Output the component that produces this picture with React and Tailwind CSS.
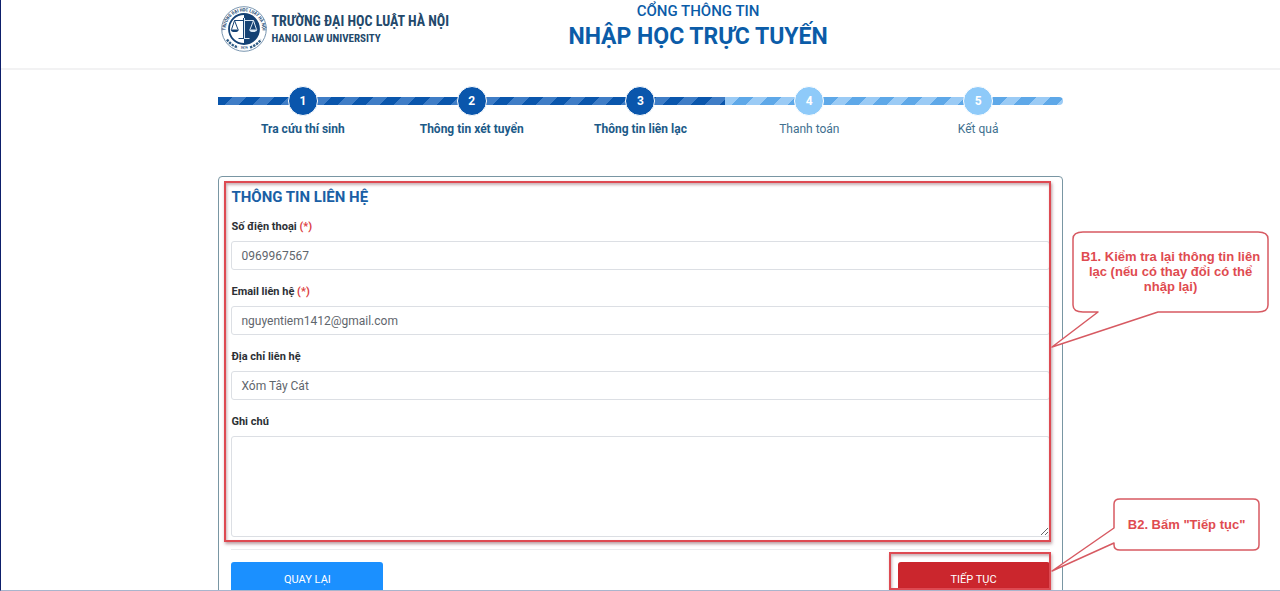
import React, { useState } from 'react';
import clsx from 'clsx';

// --- Static config ---
const STEPS = [
  { id: 1, label: 'Tra cứu thí sinh' },
  { id: 2, label: 'Thông tin xét tuyển' },
  { id: 3, label: 'Thông tin liên lạc' },
  { id: 4, label: 'Thanh toán' },
  { id: 5, label: 'Kết quả' },
];

const CURRENT_STEP = 3;

const FIELDS = [
  { name: 'phone', label: 'Số điện thoại', type: 'tel', required: true },
  { name: 'email', label: 'Email liên hệ', type: 'email', required: true },
  { name: 'address', label: 'Địa chỉ liên hệ', type: 'text', required: false },
];

// --- University seal ---
const Seal = () => (
  <svg viewBox="0 0 46 46" className="size-[46px] shrink-0" aria-hidden="true">
    <defs>
      <path id="seal-top" d="M4.9 27 A18.4 18.4 0 1 1 41.1 27" />
      <path id="seal-bottom" d="M7 35.5 A20.6 20.6 0 0 0 39 35.5" />
    </defs>
    <circle cx="23" cy="23" r="22.3" fill="#fff" stroke="#6a89a6" strokeWidth="0.9" />
    <text fontSize="4.6" fontWeight="700" fill="#1d4a73">
      <textPath href="#seal-top" startOffset="50%" textAnchor="middle">TRƯỜNG ĐẠI HỌC LUẬT HÀ NỘI</textPath>
    </text>
    <path d="M6 33.5 A20 20 0 0 0 17 41.4" fill="none" stroke="#2f5c85" strokeWidth="2.4" strokeDasharray="2.4 1" />
    <path d="M29 41.4 A20 20 0 0 0 40 33.5" fill="none" stroke="#2f5c85" strokeWidth="2.4" strokeDasharray="2.4 1" />
    <text fontSize="3.8" fontWeight="700" fill="#1d4a73">
      <textPath href="#seal-bottom" startOffset="50%" textAnchor="middle">1979</textPath>
    </text>
    <circle cx="23" cy="23" r="15" fill="#fff" stroke="#154274" strokeWidth="1.8" />
    <path d="M23 8 A15 15 0 0 1 23 38 Z" fill="#154274" />
    {/* scales: dark on the white half, light on the dark half */}
    <g fill="none" strokeWidth="1">
      <path d="M23 14.5 H13.5 M13.5 14.5 L10.5 23.5 M13.5 14.5 L17 23.5 M22.5 12 V32 M17.5 32.5 H23" stroke="#154274" />
      <path d="M23 14.5 H32.5 M32.5 14.5 L29 23.5 M32.5 14.5 L35.5 23.5 M23.5 12 V32 M23 32.5 H28.5" stroke="#dbe7f2" />
    </g>
    <path d="M9.5 23.5 H18 A4.3 3 0 0 1 9.5 23.5 Z" fill="#154274" />
    <path d="M28 23.5 H36.5 A4.3 3 0 0 1 28 23.5 Z" fill="#dbe7f2" />
  </svg>
);

const Header = () => (
  <header className="h-[70px] border-b-2 border-[#f2f2f3]">
    <div className="mx-auto flex w-[66%] items-start">
      <a href="#" className="flex w-[350px] shrink-0 items-center gap-1 pt-1.5 pl-[3px] font-['Roboto_Condensed','Liberation_Sans_Narrow','Roboto',sans-serif] font-bold text-[#23496b]">
        <Seal />
        <span className="flex flex-col whitespace-nowrap">
          <span className="text-[14px] leading-5">TRƯỜNG ĐẠI HỌC LUẬT HÀ NỘI</span>
          <span className="text-[11px] leading-4">HANOI LAW UNIVERSITY</span>
        </span>
      </a>
      <div className="pt-px text-center whitespace-nowrap text-[#0b5ca8]">
        <p className="text-[15px] leading-5 font-medium">CỔNG THÔNG TIN</p>
        <h1 className="text-[23px] leading-8 font-bold">NHẬP HỌC TRỰC TUYẾN</h1>
      </div>
    </div>
  </header>
);

// --- Progress bar with numbered steps ---
const Stepper = () => (
  <nav aria-label="Tiến trình" className="relative pt-4">
    <div className="absolute inset-x-0 top-[27px] flex h-2 overflow-hidden rounded-r-full">
      <div className="w-3/5 bg-[repeating-linear-gradient(135deg,#0a56ac_0_10px,#3f7dc6_10px_20px)]" />
      <div className="w-2/5 bg-[repeating-linear-gradient(135deg,#9bcbf5_0_10px,#5ea8e8_10px_20px)]" />
    </div>
    <ol className="relative grid grid-cols-5">
      {STEPS.map((step) => {
        const done = step.id <= CURRENT_STEP;
        return (
          <li key={step.id} className="flex flex-col items-center gap-[5px]">
            <span
              className={clsx(
                'flex size-[30px] items-center justify-center rounded-full border border-white text-[12px] font-bold text-white',
                done ? 'bg-[#0a56ac]' : 'bg-[#8ecaf9]'
              )}
            >
              {step.id}
            </span>
            <span className={clsx('text-[12px] leading-4', done ? 'font-bold text-[#1c5a88]' : 'text-[#41708f]')}>
              {step.label}
            </span>
          </li>
        );
      })}
    </ol>
  </nav>
);

const inputClass =
  'block w-full rounded-[3px] border border-[#dcdfe4] bg-white px-[9px] text-[12px] text-[#5f666d] outline-none focus:border-[#1b90ff]';

const ContactForm = () => {
  const [values, setValues] = useState({
    phone: '0969967567',
    email: 'nguyentiem1412@gmail.com',
    address: 'Xóm Tây Cát',
    note: '',
  });

  const handleChange = (e) => setValues({ ...values, [e.target.name]: e.target.value });

  return (
    <form
      onSubmit={(e) => e.preventDefault()}
      className="rounded-[4px] border border-[#7996a3] px-3 pt-2.5 pb-4"
    >
      <h2 className="mb-3 text-[15px] leading-5 font-bold text-[#1a5fa5]">THÔNG TIN LIÊN HỆ</h2>

      <div className="flex flex-col gap-3.5">
        {FIELDS.map((field) => (
          <div key={field.name} className="flex flex-col gap-1.5">
            <label htmlFor={field.name} className="text-[11px] leading-4 font-bold text-[#2c3035]">
              {field.label} {field.required && <span className="text-[#dc3f45]">(*)</span>}
            </label>
            <input
              id={field.name}
              name={field.name}
              type={field.type}
              value={values[field.name]}
              onChange={handleChange}
              className={clsx(inputClass, 'h-[29px]')}
            />
          </div>
        ))}
        <div className="flex flex-col gap-1.5">
          <label htmlFor="note" className="text-[11px] leading-4 font-bold text-[#2c3035]">Ghi chú</label>
          <textarea
            id="note"
            name="note"
            value={values.note}
            onChange={handleChange}
            className={clsx(inputClass, 'h-[101px] resize-y')}
          />
        </div>
      </div>

      <hr className="my-3 border-[#ebecee]" />

      <div className="flex justify-between text-[11px] text-white">
        <button type="button" className="h-9 w-[152px] rounded-[3px] bg-[#1b90ff]">QUAY LẠI</button>
        <button type="submit" className="h-9 w-[152px] rounded-[3px] bg-[#cb262d]">TIẾP TỤC</button>
      </div>
    </form>
  );
};

// --- Guide marks drawn over the form ---
const Guides = () => (
  <div className="pointer-events-none font-['Liberation_Sans',Arial,sans-serif] text-[13px] leading-[15px] font-bold text-[#df4b50]">
    <div className="absolute top-[5px] right-3 left-[6px] h-[361px] border-2 border-[#de4a52] shadow-[1px_2px_3px_rgba(120,60,70,0.5),inset_1px_2px_3px_rgba(120,60,70,0.4)]" />
    <div className="absolute top-[376px] right-3 h-[38px] w-[162px] border-2 border-[#de4a52] shadow-[1px_2px_3px_rgba(120,60,70,0.4),inset_1px_2px_3px_rgba(120,60,70,0.4)]" />

    <div className="absolute top-[54px] left-full -ml-3 h-[118px] w-[218px]">
      <svg viewBox="0 0 218 118" className="absolute inset-0 size-full" aria-hidden="true">
        <path
          d="M32 2 H207 Q217 2 217 9 V75 Q217 82 207 82 H107 L1 117 L47 82 H32 Q22 82 22 75 V9 Q22 2 32 2 Z"
          fill="#fff" stroke="#d75a62" strokeWidth="1.5" strokeLinejoin="round"
        />
      </svg>
      <p className="relative ml-[22px] px-1 pt-[19px] text-center">
        B1. Kiểm tra lại thông tin liên lạc (nếu có thay đổi có thể nhập lại)
      </p>
    </div>

    <div className="absolute top-[322px] left-full -ml-3 h-[75px] w-[209px]">
      <svg viewBox="0 0 209 75" className="absolute inset-0 size-full" aria-hidden="true">
        <path
          d="M69 1 H202 Q208 1 208 6 V47 Q208 52 202 52 H69 Q63 52 63 47 V45 L1 73 L63 30 V6 Q63 1 69 1 Z"
          fill="#fff" stroke="#d75a62" strokeWidth="1.5" strokeLinejoin="round"
        />
      </svg>
      <p className="relative ml-[63px] pt-[19px] text-center">B2. Bấm "Tiếp tục"</p>
    </div>
  </div>
);

export default function App() {
  return (
    <div className="h-screen overflow-hidden border-b border-l border-b-[#a9b5cd] border-l-[#0d1f6b] bg-white font-['Roboto',sans-serif]">
      <Header />
      <main className="mx-auto w-[66%]">
        <Stepper />
        <section className="relative mt-[39px]">
          <ContactForm />
          <Guides />
        </section>
      </main>
    </div>
  );
}
